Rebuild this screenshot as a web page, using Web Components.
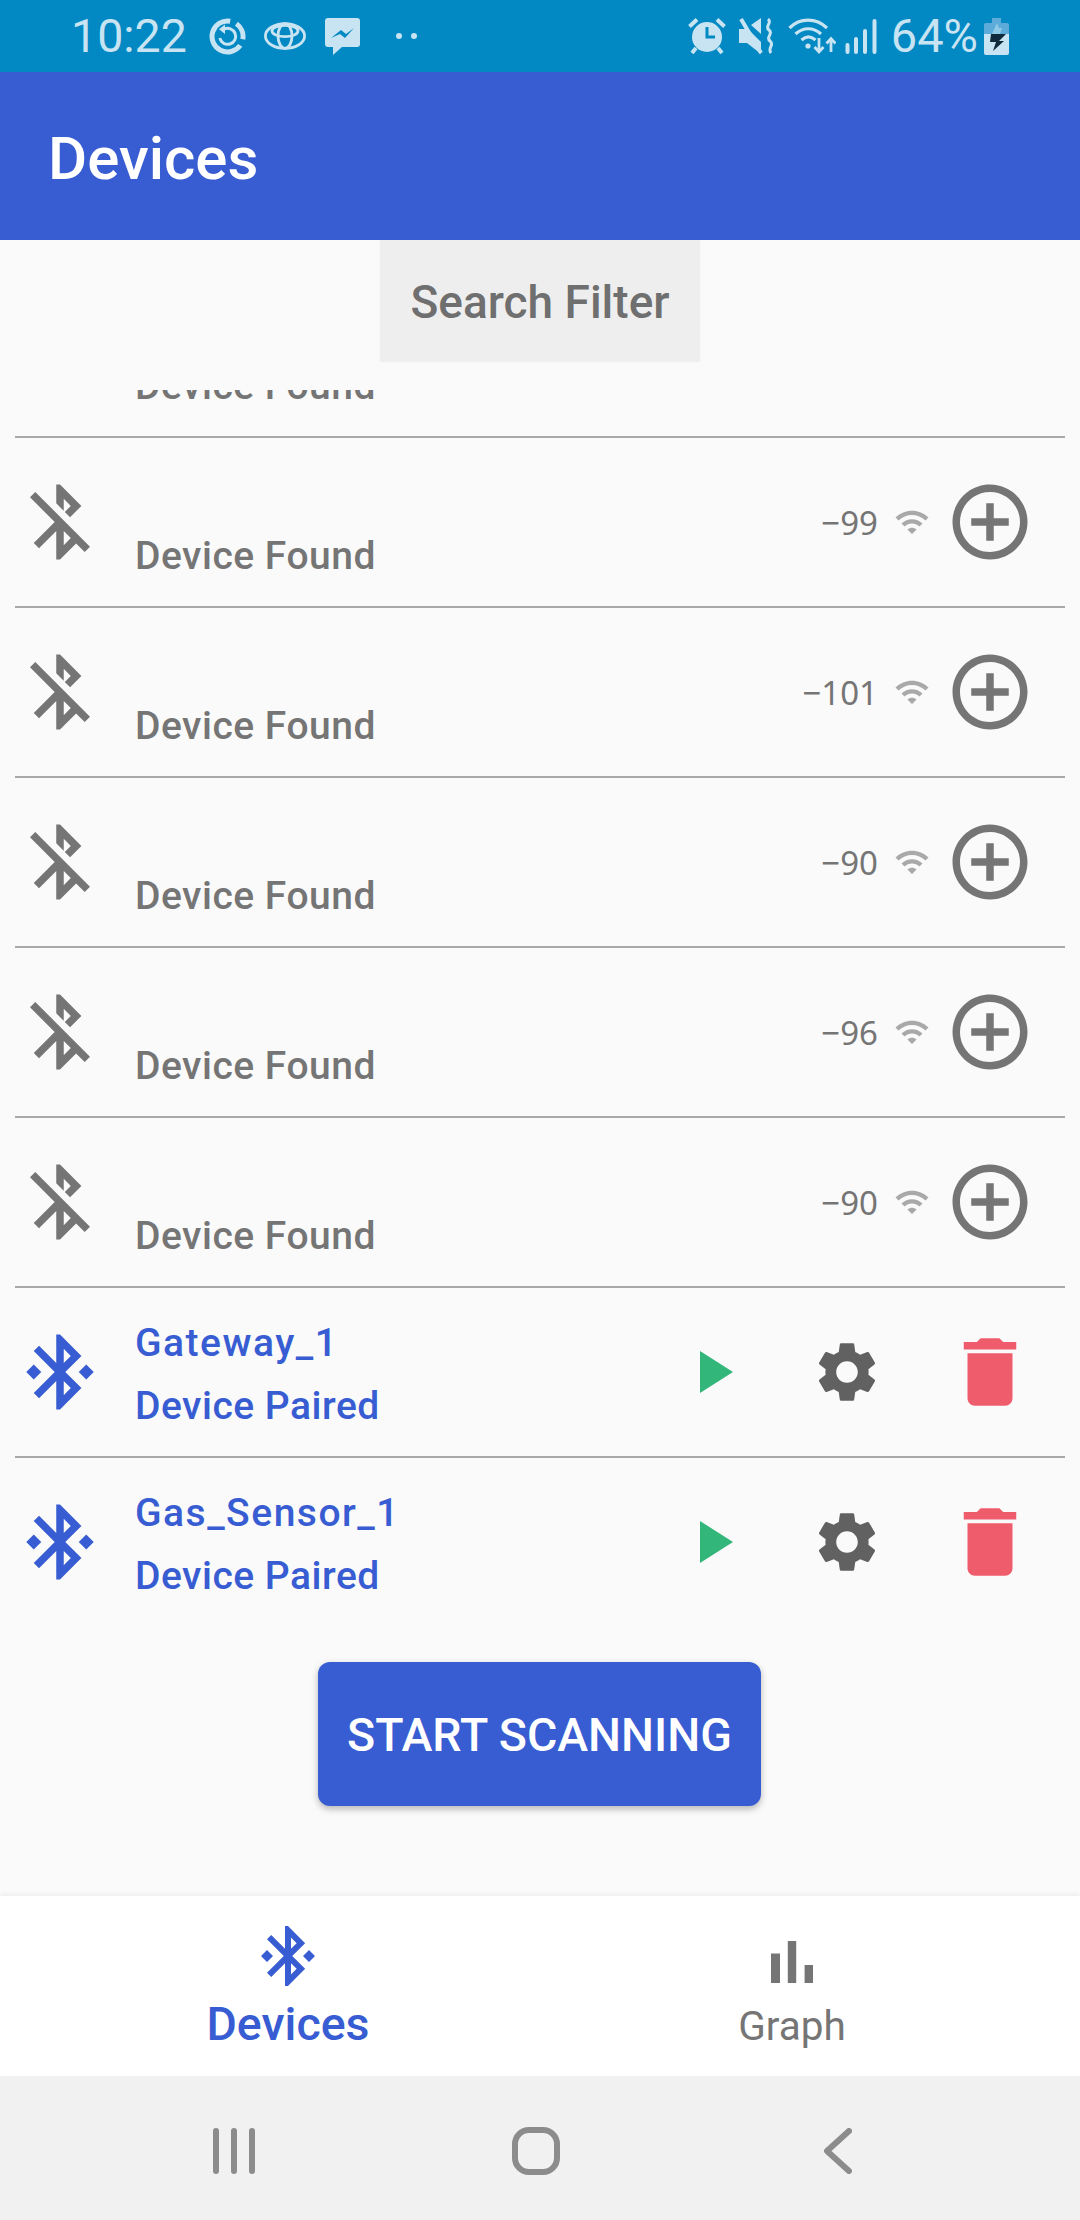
<!DOCTYPE html>
<html lang="en">
<head>
<meta charset="utf-8">
<title>Devices</title>
<style>
html,body{margin:0;padding:0;}
body{width:1080px;height:2220px;overflow:hidden;background:#fafafa;font-family:Roboto,"Liberation Sans",sans-serif;display:flex;flex-direction:column;}
</style>
</head>
<body>
<status-bar></status-bar>
<app-bar>Devices</app-bar>
<filter-button>Search Filter</filter-button>
<device-list>
  <device-row kind="found"></device-row>
  <device-row kind="found" rssi="−99"></device-row>
  <device-row kind="found" rssi="−101"></device-row>
  <device-row kind="found" rssi="−90"></device-row>
  <device-row kind="found" rssi="−96"></device-row>
  <device-row kind="found" rssi="−90"></device-row>
  <device-row kind="paired" name="Gateway_1"></device-row>
  <device-row kind="paired" name="Gas_Sensor_1" last></device-row>
</device-list>
<scan-button>START SCANNING</scan-button>
<tab-bar>
  <tab-item icon="bt" active>Devices</tab-item>
  <tab-item icon="bars">Graph</tab-item>
</tab-bar>
<system-nav></system-nav>

<script>
const PATHS = {
  bt: 'M7 12l-2-2-2 2 2 2 2-2zm10.71-4.29L12 2h-1v7.59L6.41 5 5 6.41 10.59 12 5 17.59 6.41 19 11 14.41V22h1l5.71-5.71-4.3-4.29 4.3-4.29zM13 5.83l1.88 1.88L13 9.59V5.83zm1.88 10.46L13 18.17v-3.76l1.88 1.88zM19 10l-2 2 2 2 2-2-2-2z',
  btoff: 'M13 5.83l1.88 1.88-1.6 1.6 1.41 1.41 3.02-3.02L12 2h-1v5.03l2 2v-3.2zM5.41 4L4 5.41 10.59 12 5 17.59 6.41 19 11 14.41V22h1l4.29-4.29 2.3 2.3L20 18.59 5.41 4zM13 18.17v-3.76l1.88 1.88L13 18.17z',
  add: 'M13 7h-2v4H7v2h4v4h2v-4h4v-2h-4V7zm-1-5C6.48 2 2 6.48 2 12s4.48 10 10 10 10-4.48 10-10S17.52 2 12 2zm0 18c-4.41 0-8-3.59-8-8s3.59-8 8-8 8 3.59 8 8-3.59 8-8 8z',
  wifi: 'M1 9l2 2c4.97-4.97 13.03-4.97 18 0l2-2C16.93 2.93 7.08 2.93 1 9zm8 8l3 3 3-3c-1.65-1.66-4.34-1.66-6 0zm-4-4l2 2c2.76-2.76 7.24-2.76 10 0l2-2C15.14 9.14 8.87 9.14 5 13z',
  play: 'M8 5v14l11-7z',
  gear: 'M19.14 12.94c.04-.3.06-.61.06-.94 0-.32-.02-.64-.07-.94l2.03-1.58c.18-.14.23-.41.12-.61l-1.92-3.32c-.12-.22-.37-.29-.59-.22l-2.39.96c-.5-.38-1.03-.7-1.62-.94l-.36-2.54c-.04-.24-.24-.41-.48-.41h-3.84c-.24 0-.43.17-.47.41l-.36 2.54c-.59.24-1.13.57-1.62.94l-2.39-.96c-.22-.08-.47 0-.59.22L2.74 8.87c-.12.21-.08.47.12.61l2.03 1.58c-.05.3-.09.63-.09.94s.02.64.07.94l-2.03 1.58c-.18.14-.23.41-.12.61l1.92 3.32c.12.22.37.29.59.22l2.39-.96c.5.38 1.03.7 1.62.94l.36 2.54c.05.24.24.41.48.41h3.84c.24 0 .44-.17.47-.41l.36-2.54c.59-.24 1.13-.56 1.62-.94l2.39.96c.22.08.47 0 .59-.22l1.92-3.32c.12-.22.07-.47-.12-.61l-2.01-1.58zM12 15.6c-1.98 0-3.6-1.62-3.6-3.6s1.62-3.6 3.6-3.6 3.6 1.62 3.6 3.6-1.62 3.6-3.6 3.6z',
  trash: 'M6 19c0 1.1.9 2 2 2h8c1.1 0 2-.9 2-2V7H6v12zM19 4h-3.5l-1-1h-5l-1 1H5v2h14V4z',
  bars: 'M5 9.2h3V19H5zM10.6 5h2.8v14h-2.8zm5.6 8H19v6h-2.8z'
};
const svg = (name, size, color) => `<svg width="${size}" height="${size}" viewBox="0 0 24 24" fill="${color}" style="display:block;flex:none"><path fill-rule="evenodd" d="${PATHS[name]}"/></svg>`;

function define(tag, html, setup) {
  customElements.define(tag, class extends HTMLElement {
    constructor() {
      super();
      this.attachShadow({mode: 'open'});
    }
    connectedCallback() {
      this.shadowRoot.innerHTML = typeof html === 'function' ? html(this) : html;
      if (setup) setup(this);
    }
  });
}

const L = '#c8e4f2';
const BLUE = '#385cd2';
define('status-bar', `
<style>
:host{display:flex;align-items:center;height:72px;flex:none;background:#0288c3;color:${L};font-family:Roboto,sans-serif;padding:0 71px 0 71px;box-sizing:border-box;}
.t{font-size:46.5px;line-height:72px;}
.p{font-size:47px;line-height:72px;margin:0 6px 0 14px;}
svg{display:block;flex:none;}
.sp{flex:1;}
</style>
<span class="t">10:22</span>
<svg style="margin-left:22px" width="37" height="37" viewBox="0 0 37 37" fill="none" stroke="${L}" stroke-width="5">
  <path d="M27.4 5.8A15.5 15.5 0 0 1 33.8 21.2"/><path d="M31.2 27.4A15.5 15.5 0 1 1 21.2 3.2"/>
  <path stroke-width="3" d="M15 11.2A8 8 0 1 1 10.8 20"/><path stroke="none" fill="${L}" d="M16 6.5v9.5L10 11.2z"/>
</svg>
<svg style="margin-left:18px" width="42" height="28" viewBox="0 0 42 28" fill="none" stroke="${L}" stroke-width="2.8">
  <ellipse cx="21" cy="14" rx="19.6" ry="12.4"/><ellipse cx="21" cy="14" rx="7" ry="12.4"/><ellipse cx="21" cy="9" rx="13" ry="5.6"/>
</svg>
<svg style="margin-left:19px" width="35" height="37" viewBox="0 0 35 37">
  <path fill="${L}" d="M3 0h29a3 3 0 0 1 3 3v23a3 3 0 0 1-3 3H17l-9 8v-8H3a3 3 0 0 1-3-3V3a3 3 0 0 1 3-3z"/>
  <path fill="#0288c3" d="M6 20l10-8 5 4 8-6-9 10-5-4z"/>
</svg>
<svg style="margin-left:36px" width="21" height="8" viewBox="0 0 21 8"><circle cx="3" cy="4" r="3" fill="${L}"/><circle cx="18" cy="4" r="3" fill="${L}"/></svg>
<span class="sp"></span>
<svg width="38" height="36" viewBox="0 0 38 36">
  <circle cx="19" cy="19" r="15" fill="${L}"/>
  <path fill="none" stroke="#0288c3" stroke-width="3" d="M19 9v10h8"/>
  <path fill="none" stroke="${L}" stroke-width="4" d="M1.5 8.5L9 1.5M36.5 8.5L29 1.5M8 30l-4 5M30 30l4 5"/>
</svg>
<svg style="margin-left:13px" width="35" height="36" viewBox="0 0 35 36">
  <path fill="${L}" d="M0 11h7l1-1 14 14v12L8 25H0zM12 7l10-7v16z"/>
  <path fill="none" stroke="${L}" stroke-width="4" d="M2 1l20 34"/>
  <path fill="none" stroke="${L}" stroke-width="3" d="M29 1c5 4-4 7 1 11s-4 7 1 11-3 7 1 12"/>
</svg>
<svg style="margin-left:14px" width="48" height="37" viewBox="0 0 48 37" fill="none" stroke="${L}" stroke-width="3.2">
  <path d="M1.5 10C12-.5 28-.5 39 10"/><path d="M7.5 16c7.5-7 18-7 25.5 0"/><path d="M13.5 22c4.5-4 9.5-4 14 0"/>
  <circle cx="20" cy="28" r="2.6" fill="${L}" stroke="none"/>
  <path stroke-width="2.8" d="M31 20v13M26.5 29l4.5 5 4.5-5M43 34V21M38.5 25.5l4.5-5 4.5 5"/>
</svg>
<svg style="margin-left:9px" width="32" height="35" viewBox="0 0 32 35" fill="none" stroke="${L}" stroke-width="4" stroke-linecap="round">
  <path d="M2.5 26v7M11 20v13M20 12v21M29.5 2v31"/>
</svg>
<span class="p">64%</span>
<svg width="25" height="37" viewBox="0 0 25 37">
  <path fill="#5cabd8" d="M8 0h9v5h6a2 2 0 0 1 2 2v10H0V7a2 2 0 0 1 2-2h6z"/>
  <path fill="${L}" d="M0 16h25v19a2 2 0 0 1-2 2H2a2 2 0 0 1-2-2z"/>
  <path fill="#8fc9e6" d="M13 5l-5 11h8l2-6h-3z"/>
  <path fill="#10293c" d="M7 16h15l-7 7h5L9 33l3-9H6z"/>
</svg>
`);

define('app-bar', `
<style>
:host{display:block;flex:none;height:168px;box-sizing:border-box;padding:8px 0 0 48px;background:${BLUE};color:#fff;font:500 60px/158px Roboto,sans-serif;}
</style><slot></slot>`);

define('filter-button', `
<style>
:host{display:block;flex:none;align-self:center;width:320px;height:121px;box-sizing:border-box;padding-top:4px;background:#eee;color:#6f6f6f;font:500 46px/117px Roboto,sans-serif;text-align:center;box-shadow:0 1px 2px rgba(0,0,0,.06);}
</style><slot></slot>`);

define('device-list', `
<style>
:host{display:block;flex:none;height:1238px;margin-top:29px;overflow:hidden;}
.s{margin-top:-122px;}
</style><div class="s"><slot></slot></div>`);

define('device-row', el => {
  const paired = el.getAttribute('kind') === 'paired';
  const c = paired ? BLUE : '#757575';
  const name = el.getAttribute('name') || '';
  const last = el.hasAttribute('last');
  const right = paired
    ? `<span class="i" style="margin-right:63px">${svg('play',72,'#32b67a')}</span>
       <span class="i" style="margin-right:62px">${svg('gear',72,'#616161')}</span>
       <span class="i">${svg('trash',90,'#ef5d6c')}</span>`
    : `<span class="r">${el.getAttribute('rssi') || ''}</span>
       <span class="i" style="margin:0 15px 0 16px">${svg('wifi',36,'#a9a9a9')}</span>
       <span class="i">${svg('add',90,'#757575')}</span>`;
  return `
<style>
:host{display:flex;align-items:center;height:170px;box-sizing:border-box;margin:0 15px;padding-right:30px;border-bottom:2px solid ${last ? 'transparent' : '#a8a8a8'};font-family:Roboto,sans-serif;}
.txt{flex:1;margin-left:30px;padding-top:5px;color:${c};font-size:39px;font-weight:500;line-height:63px;}
.txt div{height:63px;white-space:nowrap;letter-spacing:.5px;}
.txt .n{letter-spacing:1.5px;}
.r{font:400 33px/40px "Noto Sans",Roboto,sans-serif;color:#757575;position:relative;top:1px;}
.i{display:block;flex:none;}
</style>
${svg(paired ? 'bt' : 'btoff', 90, c)}
<div class="txt"><div class="n">${name}</div><div>${paired ? 'Device Paired' : 'Device Found'}</div></div>
${right}`;
});

define('scan-button', `
<style>
:host{display:block;flex:none;align-self:center;width:443px;height:144px;box-sizing:border-box;padding-top:3px;margin-top:34px;margin-left:-1px;border-radius:12px;background:${BLUE};color:#fff;font:500 46.5px/141px Roboto,sans-serif;text-align:center;box-shadow:0 3px 7px rgba(0,0,0,.28);white-space:nowrap;}
</style><slot></slot>`);

define('tab-bar', `
<style>
:host{display:grid;grid-template-columns:1fr 1fr;flex:none;height:180px;margin-top:auto;padding:0 36px;background:#fff;box-shadow:0 -2px 4px rgba(0,0,0,.05);}
</style><slot></slot>`);

define('tab-item', el => {
  const active = el.hasAttribute('active');
  const c = active ? BLUE : '#757575';
  return `
<style>
:host{display:flex;flex-direction:column;align-items:center;padding-top:${active ? 24 : 30}px;color:${c};font-family:Roboto,sans-serif;}
.l{margin-top:${active ? 5 : 1}px;font-size:${active ? 46.5 : 40.5}px;font-weight:${active ? 500 : 400};line-height:54px;}
</style>
${svg(el.getAttribute('icon'), 72, c)}
<div class="l"><slot></slot></div>`;
});

define('system-nav', `
<style>
:host{display:grid;grid-template-columns:repeat(3,302px);flex:none;height:144px;box-sizing:border-box;padding:5px 0 0 83px;background:#f1f1f1;align-items:center;justify-items:center;}
svg{display:block;}
</style>
<svg width="42" height="46" viewBox="0 0 42 46" fill="#8c8c8c"><rect x="0" y="0" width="6" height="46" rx="3"/><rect x="18" y="0" width="6" height="46" rx="3"/><rect x="36" y="0" width="6" height="46" rx="3"/></svg>
<svg width="48" height="48" viewBox="0 0 48 48" fill="none" stroke="#8c8c8c" stroke-width="6"><rect x="3" y="3" width="42" height="42" rx="14"/></svg>
<svg width="28" height="46" viewBox="0 0 28 46" fill="none" stroke="#8c8c8c" stroke-width="6" stroke-linecap="round" stroke-linejoin="round"><path d="M25 3L3 23l22 20"/></svg>
`);
</script>
</body>
</html>
